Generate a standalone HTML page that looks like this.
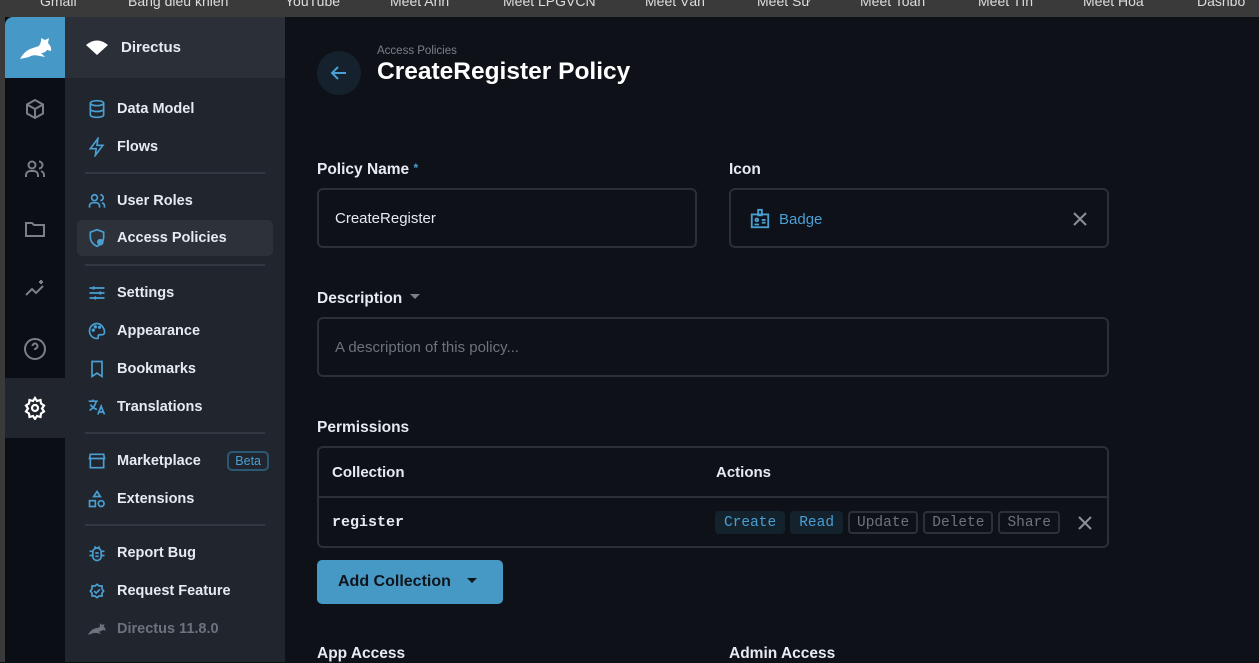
<!DOCTYPE html>
<html><head><meta charset="utf-8"><style>
*{box-sizing:border-box;margin:0;padding:0}
body{width:1259px;height:662px;overflow:hidden;background:#0e1118;font-family:"Liberation Sans",sans-serif;color:#e6ebf1;position:relative}
.top{position:absolute;left:0;top:0;width:1259px;height:17px;background:#3a3a3a;color:#ddd;font-size:14px;white-space:nowrap;overflow:hidden}
.top span{position:absolute;top:-7px}
.edge{position:absolute;left:0;top:17px;width:5px;height:645px;background:#3a3a3a}
.mod{position:absolute;left:5px;top:17px;width:60px;height:645px;background:#0b0e14}
.logo{position:absolute;left:0;top:0;width:60px;height:61px;background:#4699c6;border-top-left-radius:8px}
.mi{position:absolute;left:18px;width:24px;height:24px}
.nav{position:absolute;left:65px;top:17px;width:220px;height:645px;background:#21252d}
.navh{height:61px;background:#2b3038;display:flex;align-items:center;padding-left:20px;font-size:15px;font-weight:bold}
.it{position:absolute;left:12px;width:196px;height:34px;display:flex;align-items:center;padding-left:10px;font-size:14.5px;font-weight:bold;border-radius:5px}
.it svg{width:20px;height:20px;margin-right:10px;stroke:#4a9fd3;fill:none;stroke-width:2}
.sep{position:absolute;left:20px;width:180px;height:2px;background:#323741}
.main{position:absolute;left:285px;top:17px;width:974px;height:645px}
.lbl{position:absolute;font-size:15.5px;font-weight:bold}
.box{position:absolute;border:2px solid #2a2f38;border-radius:6px}
.chip{display:inline-block;height:23px;line-height:21px;padding:0 7px;border-radius:4px;font-family:"Liberation Mono",monospace;font-size:14.5px;margin-right:5px;border:2px solid #2c3038;color:#6d7480}
.chip.on{background:#13222d;border-color:#13222d;color:#4a9fd3}
</style></head><body>
<div class="top"><span style="left:40px">Gmail</span><span style="left:128px">Bảng điều khiển</span><span style="left:285px">YouTube</span><span style="left:390px">Meet Anh</span><span style="left:503px">Meet LPGVCN</span><span style="left:645px">Meet Vân</span><span style="left:757px">Meet Sử</span><span style="left:860px">Meet Toàn</span><span style="left:978px">Meet Tín</span><span style="left:1083px">Meet Hóa</span><span style="left:1197px">Dashbo</span></div>
<div class="edge"></div>
<div class="mod">
<div class="logo"><svg width="60" height="61" viewBox="0 0 60 61"><path d="M15 42 Q20 33 28 31 L34 29 Q37 24 36 21 L40 23 L44 21 L43 26 Q47 30 46 34 L42 33 Q40 36 36 36 L40 40 L35 39 Q28 37 24 40 Z" fill="#fff"/></svg></div>
<svg class="mi" style="top:80px" viewBox="0 0 24 24" fill="none" stroke="#7a8089" stroke-width="2"><path d="M12 3l8 4.5v9L12 21l-8-4.5v-9z M4 7.5l8 4.5 8-4.5 M12 12v9"/></svg>
<svg class="mi" style="top:140px" viewBox="0 0 24 24" fill="none" stroke="#7a8089" stroke-width="2"><circle cx="9" cy="8" r="3.5"/><path d="M3 20v-2a4 4 0 0 1 4-4h4a4 4 0 0 1 4 4v2M16 4.5a3.5 3.5 0 0 1 0 7M21 20v-2a4 4 0 0 0-3-3.8"/></svg>
<svg class="mi" style="top:200px" viewBox="0 0 24 24" fill="none" stroke="#7a8089" stroke-width="2"><path d="M3 6h6l2 2h10v11H3z"/></svg>
<svg class="mi" style="top:260px" viewBox="0 0 24 24" fill="none" stroke="#7a8089" stroke-width="2"><path d="M3 18l6-6 4 4 7-7M18 3v4M16 5h4"/></svg>
<svg class="mi" style="top:320px" viewBox="0 0 24 24" fill="none" stroke="#7a8089" stroke-width="2"><circle cx="12" cy="12" r="10"/><path d="M9.5 9a2.5 2.5 0 1 1 3.5 2.3c-.8.4-1 1-1 1.7M12 17h.01"/></svg>
<div style="position:absolute;left:0;top:361px;width:60px;height:60px;background:#21252d"></div>
<svg class="mi" style="top:379px" viewBox="0 0 24 24" fill="none" stroke="#fff" stroke-width="2.2"><circle cx="12" cy="12" r="3"/><path d="M12 2l2 3 3.5-1 .5 3.5 3 2-2 3 2 3-3 2-.5 3.5-3.5-1-2 3-2-3-3.5 1-.5-3.5-3-2 2-3-2-3 3-2 .5-3.5 3.5 1z"/></svg>
</div>
<div class="nav">
<div class="navh"><svg width="24" height="18" viewBox="0 0 24 18" style="margin-right:12px"><path d="M1 6 Q12 -3 23 6 L12 16 Z" fill="#fff"/></svg>Directus</div>
<div class="it" style="top:75px"><svg viewBox="0 0 24 24"><ellipse cx="12" cy="5" rx="8" ry="3"/><path d="M4 5v14c0 1.7 3.6 3 8 3s8-1.3 8-3V5M4 12c0 1.7 3.6 3 8 3s8-1.3 8-3"/></svg>Data Model</div>
<div class="it" style="top:113px"><svg viewBox="0 0 24 24"><path d="M13 2L4 14h7l-1 8 9-12h-7z"/></svg>Flows</div>
<div class="sep" style="top:155px"></div>
<div class="it" style="top:167px"><svg viewBox="0 0 24 24"><circle cx="9" cy="8" r="3.5"/><path d="M3 20v-2a4 4 0 0 1 4-4h4a4 4 0 0 1 4 4v2M16 4.5a3.5 3.5 0 0 1 0 7M21 20v-2a4 4 0 0 0-3-3.8"/></svg>User Roles</div>
<div class="it" style="top:203px;background:#2c313a;height:36px"><svg viewBox="0 0 24 24"><path d="M12 2l8 3v6c0 5-3.5 9-8 11-4.5-2-8-6-8-11V5z"/><circle cx="16" cy="17" r="3" fill="#4a9fd3"/></svg>Access Policies</div>
<div class="sep" style="top:247px"></div>
<div class="it" style="top:259px"><svg viewBox="0 0 24 24"><path d="M3 6h18M3 12h18M3 18h18M8 4v4M16 10v4M10 16v4"/></svg>Settings</div>
<div class="it" style="top:297px"><svg viewBox="0 0 24 24"><path d="M12 3a9 9 0 1 0 0 18c1.5 0 2-1 1.5-2-.6-1.2.2-2.5 1.5-2.5H18a3 3 0 0 0 3-3c0-5-4-10.5-9-10.5z"/><circle cx="7.5" cy="11" r="1"/><circle cx="10" cy="7" r="1"/><circle cx="15" cy="7.5" r="1"/></svg>Appearance</div>
<div class="it" style="top:335px"><svg viewBox="0 0 24 24"><path d="M6 3h12v18l-6-4-6 4z"/></svg>Bookmarks</div>
<div class="it" style="top:373px"><svg viewBox="0 0 24 24"><path d="M2 5h11M7 3v2M4 9c2 3 5 5 8 6M11 5c-1 5-4 9-8 11M13 21l4-10 4 10M14.5 18h5"/></svg>Translations</div>
<div class="sep" style="top:415px"></div>
<div class="it" style="top:427px"><svg viewBox="0 0 24 24"><path d="M4 4h16l1 5H3zM4 9v11h16V9"/></svg>Marketplace<span style="position:absolute;right:4px;top:7px;border:2px solid #2b5875;border-radius:5px;color:#4a9fd3;font-weight:normal;font-size:12.5px;padding:1px 6px">Beta</span></div>
<div class="it" style="top:465px"><svg viewBox="0 0 24 24"><path d="M12 3l4 6H8z"/><rect x="3" y="14" width="7" height="7"/><circle cx="17" cy="17.5" r="3.5"/></svg>Extensions</div>
<div class="sep" style="top:507px"></div>
<div class="it" style="top:519px"><svg viewBox="0 0 24 24"><rect x="7" y="6" width="10" height="15" rx="5"/><path d="M9 4l1.5 2M15 4l-1.5 2M3 10h4M17 10h4M3 15h4M17 15h4M10 12h4M10 16h4"/></svg>Report Bug</div>
<div class="it" style="top:557px"><svg viewBox="0 0 24 24"><path d="M12 2l2.5 2H18v3.5l2 2.5-2 2.5V16h-3.5L12 18l-2.5-2H6v-3.5L4 10l2-2.5V4h3.5z" transform="translate(0 2)"/><path d="M8.5 12l2.5 2.5 4.5-4.5"/></svg>Request Feature</div>
<div class="it" style="top:595px;color:#6d737c"><svg viewBox="0 0 24 24" style="stroke:none;fill:#6d737c"><path d="M1 19 Q5 12 11 11 L15 10 Q16 7 15 5 L18 7 L21 6 L20 9 Q23 12 22 14 L19 13 Q17 15 14 15 L17 18 L13 17 Q8 16 5 18 Z"/></svg>Directus 11.8.0</div>
</div>
<div class="main">
<div style="position:absolute;left:32px;top:34px;width:44px;height:44px;border-radius:50%;background:#15222d"><svg width="44" height="44" viewBox="0 0 44 44" fill="none" stroke="#4a9fd3" stroke-width="2"><path d="M29 22H15M21 16l-6 6 6 6"/></svg></div>
<div style="position:absolute;left:92px;top:28px;font-size:11.5px;color:#7a8089">Access Policies</div>
<div style="position:absolute;left:92px;top:41px;font-size:24.5px;font-weight:bold;color:#fff">CreateRegister Policy</div>
<div class="lbl" style="left:32px;top:144px">Policy Name <span style="color:#4a9fd3;font-size:12px;vertical-align:top">*</span></div>
<div class="box" style="left:32px;top:171px;width:380px;height:60px;padding:0 16px;line-height:58px;font-size:15px">CreateRegister</div>
<div class="lbl" style="left:444px;top:144px">Icon</div>
<div class="box" style="left:444px;top:171px;width:380px;height:60px">
<svg style="position:absolute;left:18px;top:18px" width="22" height="22" viewBox="0 0 24 24" fill="none" stroke="#4a9fd3" stroke-width="2"><rect x="3" y="7" width="18" height="14"/><rect x="10" y="2" width="4" height="6"/><circle cx="8.5" cy="13" r="1.5"/><path d="M6 18h5M14 13h4M14 16h4"/></svg>
<span style="position:absolute;left:48px;top:21px;color:#4a9fd3;font-size:15px">Badge</span>
<svg style="position:absolute;left:340px;top:20px" width="18" height="18" viewBox="0 0 18 18" stroke="#8a9099" stroke-width="2"><path d="M3 3l12 12M15 3L3 15"/></svg></div>
<div class="lbl" style="left:32px;top:273px">Description <span style="display:inline-block;border:5px solid transparent;border-top-color:#7a8089;vertical-align:-1px;margin-left:3px"></span></div>
<div class="box" style="left:32px;top:300px;width:792px;height:60px;padding:0 16px;line-height:58px;font-size:15px;color:#6d737c">A description of this policy...</div>
<div class="lbl" style="left:32px;top:402px">Permissions</div>
<div class="box" style="left:32px;top:429px;width:792px;height:102px">
<div style="position:absolute;left:0;top:48px;width:788px;height:2px;background:#2a2f38"></div>
<div style="position:absolute;left:13px;top:16px;font-size:15px;font-weight:bold">Collection</div>
<div style="position:absolute;left:397px;top:16px;font-size:15px;font-weight:bold">Actions</div>
<div style="position:absolute;left:13px;top:66px;font-family:'Liberation Mono',monospace;font-size:15px;font-weight:bold">register</div>
<div style="position:absolute;left:396px;top:63px;white-space:nowrap"><span class="chip on">Create</span><span class="chip on">Read</span><span class="chip">Update</span><span class="chip">Delete</span><span class="chip">Share</span></div>
<svg style="position:absolute;left:759px;top:68px" width="14" height="14" viewBox="0 0 14 14" stroke="#8a9099" stroke-width="2"><path d="M1 1l12 12M13 1L1 13"/></svg>
</div>
<div style="position:absolute;left:32px;top:543px;width:186px;height:44px;background:#4698c5;border-radius:5px;color:#10141b;font-size:16px;font-weight:bold;line-height:44px;padding-left:21px">Add Collection <span style="display:inline-block;border:5px solid transparent;border-top-color:#10141b;vertical-align:-2px;margin-left:12px"></span></div>
<div class="lbl" style="left:32px;top:628px">App Access</div>
<div class="lbl" style="left:444px;top:628px">Admin Access</div>
</div>
</body></html>
